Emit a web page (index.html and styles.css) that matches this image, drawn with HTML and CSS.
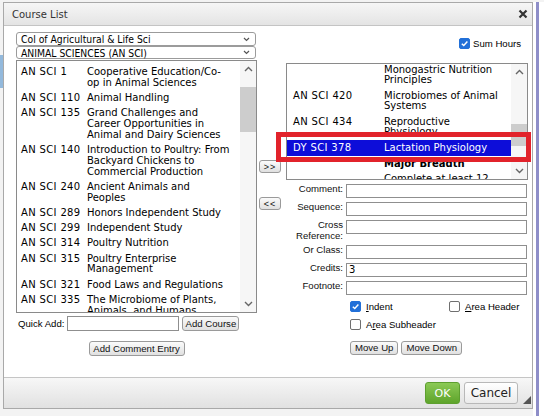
FILE: index.html
```html
<!DOCTYPE html>
<html>
<head>
<meta charset="utf-8">
<title>Course List</title>
<link rel="stylesheet" href="styles.css">
</head>
<body>
<div class="page">
  <div class="edge-left"><div class="edge-mark"></div></div>
  <div class="dialog">
    <div class="titlebar">
      <span class="title">Course List</span>
      <svg class="close" viewBox="0 0 10 10"><path d="M1.5 1.5L8.5 8.5M8.5 1.5L1.5 8.5"/></svg>
    </div>
    <div class="content">
      <div class="col-left">
        <div class="select"><span>Col of Agricultural &amp; Life Sci</span><svg class="sel-chev" viewBox="0 0 7 5"><path d="M1 1l2.5 2.5L6 1"/></svg></div>
        <div class="select second"><span>ANIMAL SCIENCES (AN SCI)</span><svg class="sel-chev" viewBox="0 0 7 5"><path d="M1 1l2.5 2.5L6 1"/></svg></div>
        <div class="listbox list-left">
          <div class="items">
            <div class="item"><span class="code">AN SCI 1</span><span class="name">Cooperative Education/Co-<br>op in Animal Sciences</span></div>
            <div class="item"><span class="code">AN SCI 110</span><span class="name">Animal Handling</span></div>
            <div class="item"><span class="code">AN SCI 135</span><span class="name">Grand Challenges and<br>Career Opportunities in<br>Animal and Dairy Sciences</span></div>
            <div class="item"><span class="code">AN SCI 140</span><span class="name">Introduction to Poultry: From<br>Backyard Chickens to<br>Commercial Production</span></div>
            <div class="item"><span class="code">AN SCI 240</span><span class="name">Ancient Animals and<br>Peoples</span></div>
            <div class="item"><span class="code">AN SCI 289</span><span class="name">Honors Independent Study</span></div>
            <div class="item"><span class="code">AN SCI 299</span><span class="name">Independent Study</span></div>
            <div class="item"><span class="code">AN SCI 314</span><span class="name">Poultry Nutrition</span></div>
            <div class="item"><span class="code">AN SCI 315</span><span class="name">Poultry Enterprise<br>Management</span></div>
            <div class="item"><span class="code">AN SCI 321</span><span class="name">Food Laws and Regulations</span></div>
            <div class="item"><span class="code">AN SCI 335</span><span class="name">The Microbiome of Plants,<br>Animals, and Humans</span></div>
          </div>
          <div class="scrollbar">
            <div class="sb-btn"><svg viewBox="0 0 9 6"><path d="M1 5L4.5 1.5L8 5"/></svg></div>
            <div class="sb-track"><div class="sb-thumb thumb-left"></div></div>
            <div class="sb-btn"><svg viewBox="0 0 9 6"><path d="M1 1L4.5 4.5L8 1"/></svg></div>
          </div>
        </div>
        <div class="quick-add">
          <span class="qa-label">Quick Add:</span>
          <span class="input qa-input"></span>
          <button class="btn">Add Course</button>
        </div>
        <div class="center-row"><button class="btn">Add Comment Entry</button></div>
      </div>

      <div class="col-mid">
        <button class="btn arrow first">&gt;&gt;</button>
        <button class="btn arrow">&lt;&lt;</button>
      </div>

      <div class="col-right">
        <div class="sum-row">
          <span class="cb on"><svg viewBox="0 0 10 10"><path d="M2 5.2L4.2 7.3L8.2 2.8"/></svg></span>
          <span>Sum Hours</span>
        </div>
        <div class="listbox list-right">
          <div class="items">
            <div class="items-inner">
              <div class="item"><span class="code"></span><span class="name">Monogastric Nutrition<br>Principles</span></div>
              <div class="item"><span class="code">AN SCI 420</span><span class="name">Microbiomes of Animal<br>Systems</span></div>
              <div class="item"><span class="code">AN SCI 434</span><span class="name">Reproductive<br>Physiology</span></div>
              <div class="item sel"><span class="code">DY SCI 378</span><span class="name">Lactation Physiology</span></div>
              <div class="item hdr"><span class="code"></span><span class="name"><b>Major Breadth</b><span class="note">Complete at least 12</span></span></div>
            </div>
          </div>
          <div class="scrollbar">
            <div class="sb-btn"><svg viewBox="0 0 9 6"><path d="M1 5L4.5 1.5L8 5"/></svg></div>
            <div class="sb-track"><div class="sb-thumb thumb-right"></div></div>
            <div class="sb-btn"><svg viewBox="0 0 9 6"><path d="M1 1L4.5 4.5L8 1"/></svg></div>
          </div>
        </div>

        <div class="form">
          <label>Comment:</label><span class="input"></span>
          <label>Sequence:</label><span class="input"></span>
          <label>Cross<br>Reference:</label><span class="input"></span>
          <label>Or Class:</label><span class="input"></span>
          <label>Credits:</label><span class="input">3</span>
          <label>Footnote:</label><span class="input"></span>
        </div>

        <div class="opts">
          <div class="opt"><span class="cb on"><svg viewBox="0 0 10 10"><path d="M2 5.2L4.2 7.3L8.2 2.8"/></svg></span><span><u>I</u>ndent</span></div>
          <div class="opt"><span class="cb"></span><span><u>A</u>rea Header</span></div>
          <div class="opt"><span class="cb"></span><span>A<u>r</u>ea Subheader</span></div>
        </div>

        <div class="moves">
          <button class="btn">Move Up</button>
          <button class="btn">Move Down</button>
        </div>

        <div class="highlight"></div>
      </div>
    </div>
    <div class="footer">
      <button class="ok">OK</button>
      <button class="cancel">Cancel</button>
      <svg class="grip" viewBox="0 0 8 8"><path d="M8 0L8 8L0 8Z"/></svg>
    </div>
  </div>
  <div class="edge-right"><div class="edge-line"></div></div>
</div>
</body>
</html>
```

FILE: styles.css
```css
* { box-sizing: border-box; margin: 0; padding: 0; }
html, body { width: 544px; height: 416px; overflow: hidden; }
body {
  background: #f3f3f3;
  font-family: "Liberation Sans", Arial, sans-serif;
  font-size: 9.6px;
  color: #000;
}
.page { display: flex; height: 416px; padding-top: 2px; }
.edge-left { width: 3px; flex: none; padding-top: 53px; }
.edge-mark { height: 33px; background: #93b9dc; }
.edge-right { flex: 1; display: flex; padding-left: 3px; background: #fff; }
.edge-line { width: 3px; background: #8e8ec8; }

.dialog {
  width: 530px; height: 407px; flex: none;
  border: 1px solid #a9a9a9;
  display: flex; flex-direction: column;
  background: #fff;
}
.titlebar {
  height: 23px; flex: none;
  display: flex; align-items: center; justify-content: space-between;
  padding: 0 4px 0 8px;
  background: linear-gradient(#f6f6f6, #e4e4e4);
  border-bottom: 1px solid #c4c4c4;
}
.title { font-family: "DejaVu Sans", Verdana, sans-serif; font-size: 10px; color: #333; }
.close { width: 10px; height: 10px; }
.close path { stroke: #333; stroke-width: 2.2; fill: none; }

.content { flex: 1; display: flex; padding: 6px 4px 0 12px; }

.col-left { width: 241px; flex: none; display: flex; flex-direction: column; }
.select {
  width: 240px; height: 14px;
  border: 1px solid #9b9b9b; border-radius: 3px;
  display: flex; align-items: center; justify-content: space-between;
  padding: 0 5px 0 4px;
  font-family: "DejaVu Sans Condensed", "DejaVu Sans", sans-serif;
  font-size: 10.3px; line-height: 12px;
  background: #fff;
}
.select.second { height: 13px; }
.sel-chev { width: 7px; height: 5px; }
.sel-chev path { stroke: #555; stroke-width: 1.2; fill: none; }

.listbox { display: flex; border: 1px solid #8a8a8a; background: #fff; overflow: hidden; }
.list-left { height: 253px; margin-top: 1px; }
.items {
  flex: 1; overflow: hidden;
  font-family: "DejaVu Sans", Verdana, sans-serif;
  font-size: 10px; line-height: 10.7px;
  white-space: nowrap;
}
.list-left .items { padding-top: 3.8px; }
.items-inner { margin-top: -1.8px; }
.item { display: flex; padding: 2.3px 0; }
.code { flex: none; letter-spacing: 0.35px; }
.list-left .code { width: 70px; padding-left: 4px; }
.list-right .code { width: 97px; padding-left: 6px; }
.item.sel { background: #0d0dd9; color: #fff; }
.item.hdr { padding-top: 3.4px; }
.item.hdr b { font-weight: bold; display: block; }
.note { display: block; margin-top: 4px; }

.scrollbar { width: 16px; flex: none; display: flex; flex-direction: column; background: #f6f6f6; }
.sb-btn { height: 16px; flex: none; display: flex; align-items: center; justify-content: center; }
.sb-btn svg { width: 9px; height: 6px; }
.sb-btn path { stroke: #666; stroke-width: 1.4; fill: none; }
.sb-track { flex: 1; }
.sb-thumb { background: #cdcdcd; }
.thumb-left { margin-top: 10px; height: 45px; }
.thumb-right { margin-top: 44px; height: 22px; }

.input {
  display: block; height: 14px;
  border: 1px solid #8f8f8f; background: #fff;
  padding-left: 2px;
  font-family: "DejaVu Sans", sans-serif; font-size: 10px; line-height: 12px;
}

.btn {
  height: 14px; padding: 0 4px;
  border: 1px solid #9a9a9a; border-radius: 3px;
  background: linear-gradient(#fbfbfb, #e0e0e0);
  font-family: "Liberation Sans", Arial, sans-serif; font-size: 9.6px; line-height: 12px;
  color: #111; white-space: nowrap;
}

.quick-add { display: flex; align-items: center; gap: 3px; margin-top: 3px; padding-left: 2px; height: 15px; }
.qa-input { width: 112px; height: 15px; }
.quick-add .btn { height: 15px; width: 57px; padding: 0; }
.center-row { display: flex; justify-content: center; margin-top: 10px; }
.center-row .btn { width: 96px; height: 15px; padding: 0; }

.col-mid { width: 29px; flex: none; display: flex; flex-direction: column; align-items: flex-start; padding-left: 2px; }
.arrow { width: 22px; height: 13px; padding: 0; letter-spacing: 1px; font-size: 9px; line-height: 10px; }
.arrow.first { margin-top: 128px; }
.arrow + .arrow { margin-top: 24px; }

.col-right { width: 242px; flex: none; position: relative; display: flex; flex-direction: column; }
.sum-row { height: 22px; display: flex; align-items: center; justify-content: flex-end; gap: 3px; padding-right: 7px; }
.list-right { height: 117px; margin-top: 9px; }

.cb {
  width: 11px; height: 11px; flex: none;
  border: 1px solid #6f6f6f; border-radius: 2px; background: #fff;
  display: flex; align-items: center; justify-content: center;
}
.cb.on { background: #2270d8; border-color: #2270d8; }
.cb svg { width: 9px; height: 9px; }
.cb path { stroke: #fff; stroke-width: 1.6; fill: none; }

.form {
  display: grid; grid-template-columns: 57px 181px;
  column-gap: 3px; row-gap: 4px;
  margin-top: 4px; line-height: 10.5px;
  align-items: start;
}
.form label { text-align: right; color: #111; }

.opts { display: grid; grid-template-columns: 99px auto; row-gap: 7px; padding-left: 64px; margin-top: 6px; }
.opt { display: flex; align-items: center; gap: 5px; height: 11px; }
.opt u { text-decoration: underline; }

.moves { display: flex; gap: 3px; padding-left: 64px; margin-top: 11px; }
.moves .btn { height: 14px; padding: 0 4px; }

.highlight {
  position: absolute; left: -10px; top: 100px;
  width: 255px; height: 30px;
  border: 5px solid #e2232b;
}

.footer {
  height: 31px; flex: none;
  border-top: 1px solid #c5c5c5;
  background: linear-gradient(#f7f7f7, #e1e1e1);
  display: flex; justify-content: flex-end; align-items: flex-start;
  gap: 4px; padding: 4px 1px 0 0;
}
.ok {
  width: 35px; height: 22px;
  border: 1px solid #5d9f2f; border-radius: 3px;
  background: linear-gradient(#8bc955, #5ea42b);
  color: #fff; font-family: "DejaVu Sans", Verdana, sans-serif; font-size: 11px;
}
.cancel {
  width: 54px; height: 22px;
  border: 1px solid #b8b8b8; border-radius: 3px;
  background: linear-gradient(#ffffff, #ebebeb);
  color: #222; font-family: "DejaVu Sans", Verdana, sans-serif; font-size: 12px;
}
.grip { width: 8px; height: 8px; align-self: flex-end; margin: 0 0 4px 1px; }
.grip path { fill: #555; }
```
